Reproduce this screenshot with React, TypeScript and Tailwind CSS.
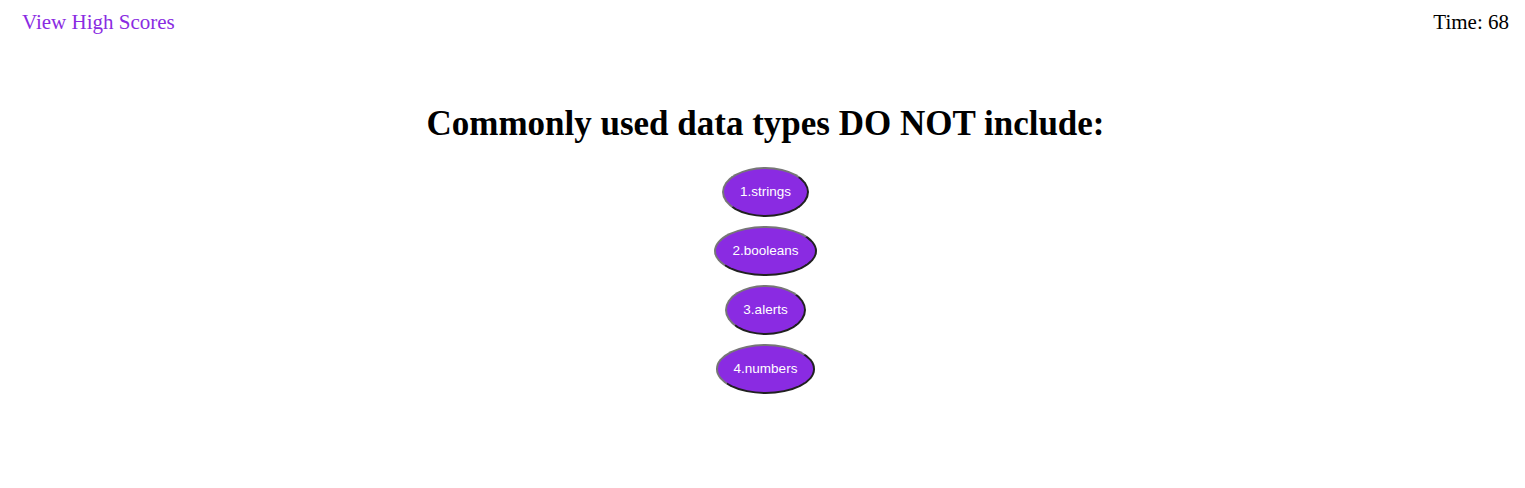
const choices = ["1.strings", "2.booleans", "3.alerts", "4.numbers"];

export default function App() {
  return (
    <div className="min-h-[488px] bg-white">
      <header className="flex items-center justify-between pl-[22px] pr-4 pt-[9px] font-['Liberation_Serif',serif] text-[21px] leading-[26px]">
        <a href="#" className="text-[#8a2be2]">
          View High Scores
        </a>
        <span className="text-black">Time: 68</span>
      </header>

      <main className="mt-[69px] flex flex-col items-center pl-[6px]">
        <h1 className="font-['Liberation_Serif',serif] text-[35px] font-bold leading-[40px] text-black">
          Commonly used data types DO NOT include:
        </h1>
        <div className="mt-[23px] flex flex-col items-center gap-[9px]">
          {choices.map((c) => (
            <button
              key={c}
              className="h-[50px] rounded-[50%] border-2 border-[#767676] bg-[#8a2be2] px-[16px] font-['Liberation_Sans',sans-serif] text-[13.5px] text-white [border-style:outset]"
            >
              {c}
            </button>
          ))}
        </div>
      </main>
    </div>
  );
}
